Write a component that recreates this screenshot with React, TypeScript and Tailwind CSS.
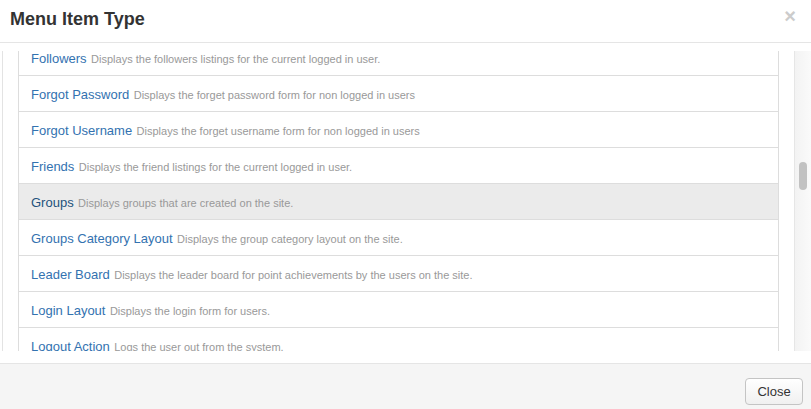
import React from "react";

const items: { t: string; d: string; active?: boolean }[] = [
  { t: "Followers", d: "Displays the followers listings for the current logged in user." },
  { t: "Forgot Password", d: "Displays the forget password form for non logged in users" },
  { t: "Forgot Username", d: "Displays the forget username form for non logged in users" },
  { t: "Friends", d: "Displays the friend listings for the current logged in user." },
  { t: "Groups", d: "Displays groups that are created on the site.", active: true },
  { t: "Groups Category Layout", d: "Displays the group category layout on the site." },
  { t: "Leader Board", d: "Displays the leader board for point achievements by the users on the site." },
  { t: "Login Layout", d: "Displays the login form for users." },
  { t: "Logout Action", d: "Logs the user out from the system." },
];

export default function App() {
  return (
    <div
      className="w-[811px] h-[409px] bg-white flex flex-col overflow-hidden"
      style={{ fontFamily: '"Liberation Sans", Arial, sans-serif' }}
    >
      <div className="h-[43px] shrink-0 border-b border-[#e5e5e5] pl-[10px] pr-[15px] pt-[10px] flex justify-between">
        <div className="text-[18px] leading-[18px] font-bold text-[#333]">Menu Item Type</div>
        <div className="text-[20px] leading-[14px] font-bold text-[#cccccc] mt-[-1px]">×</div>
      </div>
      <div className="h-[320px] shrink-0 pt-[8px] pb-[12px]">
        <div className="h-[300px] flex overflow-hidden">
          <div className="flex-1 pl-[2px] h-full">
            <div className="border-l border-[#e3e3e3] h-full pl-[15px] pr-[15px] overflow-hidden">
              <ul className="border-l border-r border-[#ddd] mt-[-11px]">
                {items.map((it) => (
                  <li
                    key={it.t}
                    className={`h-[36px] border-b border-[#ddd] pl-[12px] flex items-center whitespace-nowrap ${
                      it.active ? "bg-[#ebebeb]" : "bg-white"
                    }`}
                  >
                    <span>
                      <span className={`text-[13px] ${it.active ? "text-[#23527c]" : "text-[#3372b0]"}`}>
                        {it.t}
                      </span>{" "}
                      <span className="text-[11px] text-[#999]">{it.d}</span>
                    </span>
                  </li>
                ))}
              </ul>
            </div>
          </div>
          <div className="w-[17px] h-full border-l border-[#e6e6e6] bg-gradient-to-r from-[#f3f3f3] to-[#fafafa] pt-[111px] pl-[4px]">
            <div className="w-[8px] h-[28px] rounded-full bg-[#c2c2c2]" />
          </div>
        </div>
      </div>
      <div className="flex-1 border-t border-[#e5e5e5] bg-[#f5f5f5] flex justify-end items-start pt-[14px] pr-[8px]">
        <button className="w-[58px] h-[27px] rounded-[4px] border border-[#c4c4c4] bg-gradient-to-b from-white to-[#f0f0f0] text-[13px] text-[#333]">
          Close
        </button>
      </div>
    </div>
  );
}
